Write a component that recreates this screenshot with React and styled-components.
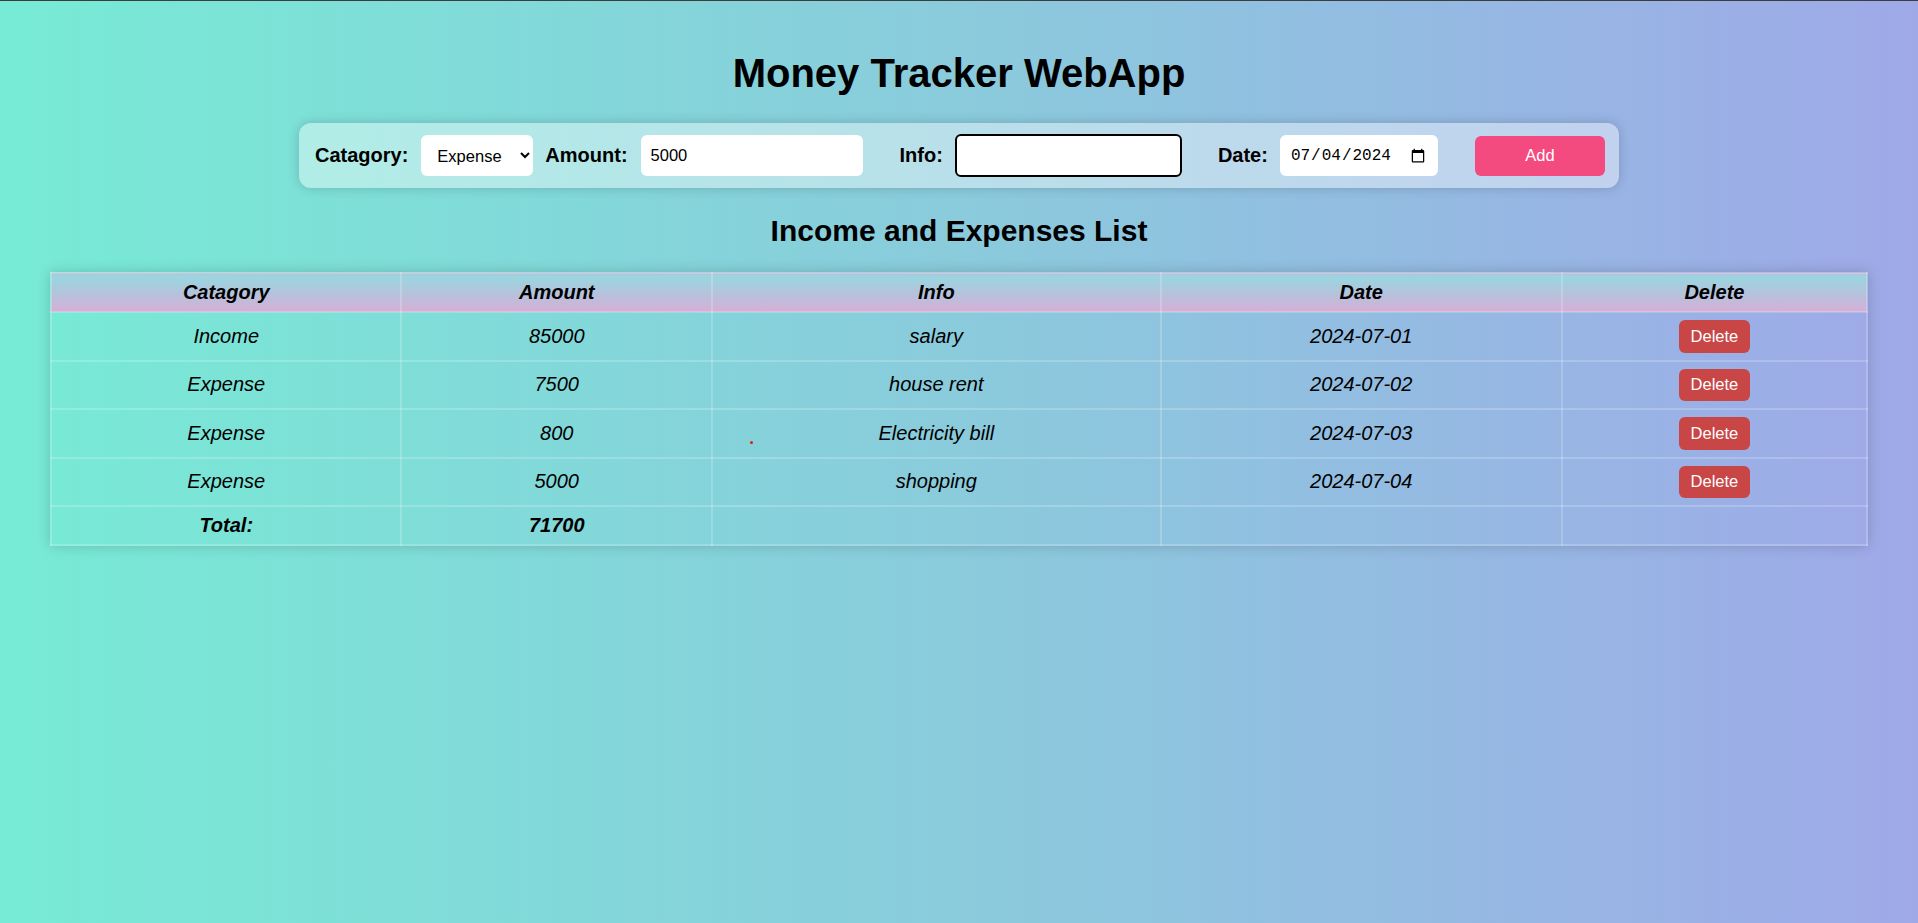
import React from "react";
import styled, { createGlobalStyle } from "styled-components";

const GlobalStyle = createGlobalStyle`
  html, body {
    margin: 0;
    padding: 0;
  }
  body {
    min-height: 100vh;
    box-sizing: border-box;
    border-top: 1px solid #3d3d3d;
    background: linear-gradient(to right, #77ebd5 0%, #8acbdc 50%, #9fa9e8 100%);
    font-family: "Liberation Sans", Arial, sans-serif;
    color: #000;
  }
`;

const Page = styled.div`
  position: relative;
  min-height: 922px;
  padding-top: 49px;
  box-sizing: border-box;
`;

const Title = styled.h1`
  margin: 0;
  text-align: center;
  font-size: 40px;
  font-weight: 700;
  line-height: 46px;
`;

const FormBar = styled.form`
  width: 1320px;
  height: 65px;
  box-sizing: border-box;
  margin: 27px auto 0;
  padding: 0 15px 0 16px;
  display: flex;
  align-items: center;
  border-radius: 12px;
  background: rgba(255, 255, 255, 0.4);
  box-shadow: 0 0 12px rgba(0, 0, 0, 0.18);
`;

const Field = styled.div`
  flex-shrink: 0;
  display: flex;
  align-items: center;
  gap: ${(p) => p.$gap || 13}px;
  margin-left: ${(p) => p.$space || 0}px;
`;

const Label = styled.label`
  font-size: 20px;
  font-weight: 700;
  white-space: nowrap;
`;

const Select = styled.select`
  width: 112px;
  height: 41px;
  border: none;
  border-radius: 6px;
  background: #fff;
  padding: 0 8px 0 12px;
  font-family: "Liberation Sans", Arial, sans-serif;
  font-size: 16.5px;
  color: #000;
`;

const TextInput = styled.input`
  flex-shrink: 0;
  width: ${(p) => p.$w}px;
  height: ${(p) => (p.$focused ? 43 : 41)}px;
  box-sizing: border-box;
  border: ${(p) => (p.$focused ? "2px solid #000" : "none")};
  border-radius: 6px;
  background: #fff;
  padding: 0 10px;
  font-family: ${(p) =>
    p.$mono ? '"Liberation Mono", "DejaVu Sans Mono", monospace' : '"Liberation Sans", Arial, sans-serif'};
  font-size: ${(p) => (p.$mono ? 16 : 16.5)}px;
  color: #000;
  outline: none;
`;

const AddButton = styled.button`
  flex-shrink: 0;
  width: 130px;
  height: 40px;
  margin-left: 37px;
  border: none;
  border-radius: 6px;
  background: #f34b80;
  color: #fff;
  font-family: "Liberation Sans", Arial, sans-serif;
  font-size: 16.5px;
  cursor: pointer;
`;

const SubTitle = styled.h2`
  margin: 26px 0 0;
  text-align: center;
  font-size: 30px;
  font-weight: 700;
  line-height: 34px;
`;

const Table = styled.table`
  width: calc(100% - 100px);
  margin: 24px 50px 0;
  border-collapse: collapse;
  border: 2px solid rgba(255, 255, 255, 0.25);
  box-shadow: 0 0 12px rgba(0, 0, 0, 0.18);
  font-style: italic;
  font-size: 20px;
`;

const HeadRow = styled.tr`
  background: linear-gradient(
    to bottom,
    #d6aed7 0px,
    #98d6df 3px,
    #b6c2dc 55%,
    #d7aed6 100%
  );
`;

const Th = styled.th`
  width: ${(p) => p.$w};
  padding: 7px;
  border: 2px solid rgba(255, 255, 255, 0.2);
  font-weight: 700;
  line-height: 23px;
`;

const Td = styled.td`
  padding: 7px;
  border: 2px solid rgba(255, 255, 255, 0.2);
  text-align: center;
  line-height: 23px;
  font-weight: ${(p) => (p.$bold ? 700 : 400)};
`;

const DeleteButton = styled.button`
  display: block;
  margin: 0 auto;
  height: 32.5px;
  padding: 0 12px;
  border: none;
  border-radius: 6px;
  background: #c84646;
  color: #fff;
  font-family: "Liberation Sans", Arial, sans-serif;
  font-size: 16.5px;
  font-style: normal;
  cursor: pointer;
`;

const Dot = styled.span`
  position: absolute;
  left: 750px;
  top: 440px;
  width: 3px;
  height: 3px;
  border-radius: 50%;
  background: #e0201a;
`;

const rows = [
  { cat: "Income", amount: 85000, info: "salary", date: "2024-07-01" },
  { cat: "Expense", amount: 7500, info: "house rent", date: "2024-07-02" },
  { cat: "Expense", amount: 800, info: "Electricity bill", date: "2024-07-03" },
  { cat: "Expense", amount: 5000, info: "shopping", date: "2024-07-04" },
];

export default function App() {
  return (
    <>
      <GlobalStyle />
      <Page>
        <Title>Money Tracker WebApp</Title>
        <FormBar onSubmit={(e) => e.preventDefault()}>
          <Field>
            <Label htmlFor="cat">Catagory:</Label>
            <Select id="cat" defaultValue="Expense">
              <option value="Expense">Expense</option>
              <option value="Income">Income</option>
            </Select>
          </Field>
          <Field $space={12}>
            <Label htmlFor="amount">Amount:</Label>
            <TextInput id="amount" type="number" $w={222} defaultValue="5000" />
          </Field>
          <Field $space={37} $gap={12}>
            <Label htmlFor="info">Info:</Label>
            <TextInput id="info" type="text" $w={227} $focused defaultValue="" />
          </Field>
          <Field $space={36} $gap={12}>
            <Label htmlFor="date">Date:</Label>
            <TextInput id="date" type="date" $w={158} $mono defaultValue="2024-07-04" />
          </Field>
          <AddButton type="submit">Add</AddButton>
        </FormBar>
        <SubTitle>Income and Expenses List</SubTitle>
        <Table>
          <thead>
            <HeadRow>
              <Th $w="19.3%">Catagory</Th>
              <Th $w="17.1%">Amount</Th>
              <Th $w="24.7%">Info</Th>
              <Th $w="22.1%">Date</Th>
              <Th $w="16.8%">Delete</Th>
            </HeadRow>
          </thead>
          <tbody>
            {rows.map((r) => (
              <tr key={r.date}>
                <Td>{r.cat}</Td>
                <Td>{r.amount}</Td>
                <Td>{r.info}</Td>
                <Td>{r.date}</Td>
                <Td>
                  <DeleteButton type="button">Delete</DeleteButton>
                </Td>
              </tr>
            ))}
            <tr>
              <Td $bold>Total:</Td>
              <Td $bold>71700</Td>
              <Td />
              <Td />
              <Td />
            </tr>
          </tbody>
        </Table>
        <Dot />
      </Page>
    </>
  );
}
